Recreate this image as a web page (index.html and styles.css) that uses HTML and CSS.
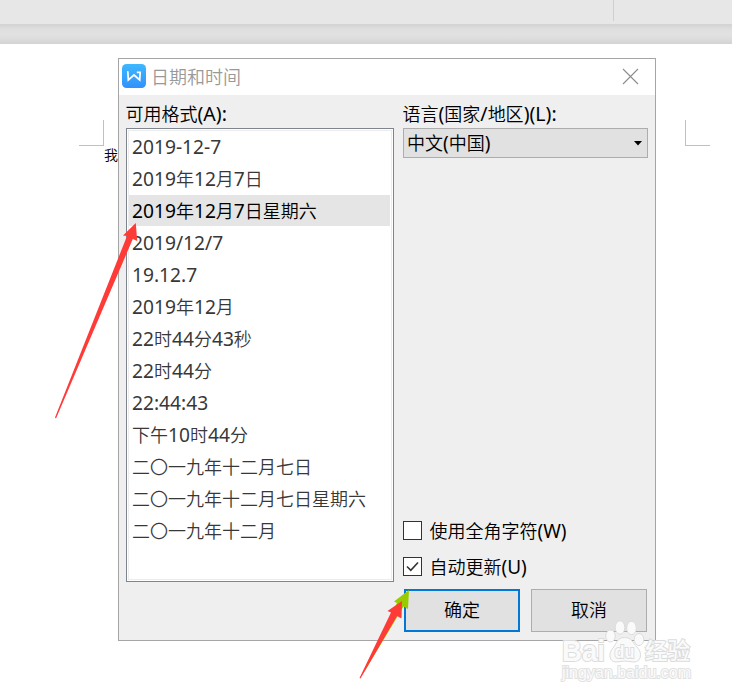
FILE: index.html
```html
<!DOCTYPE html>
<html lang="zh-CN">
<head>
<meta charset="utf-8">
<title>日期和时间</title>
<link rel="stylesheet" href="styles.css">
</head>
<body>
<div class="toolbar"><div class="divider"></div></div>
<div class="gutter"></div>
<main class="page">
  <i class="corner corner-left"></i>
  <i class="corner corner-right"></i>
  <span class="doc-text">我</span>
</main>

<section class="dialog">
  <header class="titlebar">
    <svg class="logo" width="24" height="24" viewBox="0 0 24 24">
      <defs><linearGradient id="blue" x1="0" y1="0" x2="0" y2="1"><stop offset="0" stop-color="#3fb8ff"/><stop offset="1" stop-color="#3291fb"/></linearGradient></defs>
      <rect width="24" height="24" rx="4.5" fill="url(#blue)"/>
      <path d="M5.8 7.3L6.3 16L12 11L17.7 16L18.2 8.3H14.8" fill="none" stroke="#fff" stroke-width="1.7"/>
    </svg>
    <h1 class="title">日期和时间</h1>
    <svg class="close" width="17" height="17" viewBox="0 0 17 17"><path d="M1 1L16 16M16 1L1 16" stroke="#8c8c8c" stroke-width="1.1"/></svg>
  </header>
  <div class="body">
    <div class="formats">
      <div class="label">可用格式<b>(A):</b></div>
      <ul class="list">
        <li><b>2019-12-7</b></li>
        <li><b>2019</b>年<b>12</b>月<b>7</b>日</li>
        <li class="selected"><b>2019</b>年<b>12</b>月<b>7</b>日星期六</li>
        <li><b>2019/12/7</b></li>
        <li><b>19.12.7</b></li>
        <li><b>2019</b>年<b>12</b>月</li>
        <li><b>22</b>时<b>44</b>分<b>43</b>秒</li>
        <li><b>22</b>时<b>44</b>分</li>
        <li><b>22:44:43</b></li>
        <li>下午<b>10</b>时<b>44</b>分</li>
        <li>二〇一九年十二月七日</li>
        <li>二〇一九年十二月七日星期六</li>
        <li>二〇一九年十二月</li>
      </ul>
    </div>
    <div class="options">
      <div class="label">语言<b>(</b>国家<b>/</b>地区<b>)(L):</b></div>
      <div class="select"><span>中文<b>(</b>中国<b>)</b></span><svg width="8" height="5" viewBox="0 0 8 5"><path d="M0 0H8L4 4.5Z"/></svg></div>
      <div class="check first"><span class="box"></span><span>使用全角字符<b>(W)</b></span></div>
      <div class="check"><span class="box"><svg width="17" height="17" viewBox="0 0 17 17"><path d="M3 8.5L6.8 12.3L14 4.5" fill="none" stroke="#333" stroke-width="1.6"/></svg></span><span>自动更新<b>(U)</b></span></div>
      <div class="buttons"><div class="button primary">确定</div><div class="button">取消</div></div>
    </div>
  </div>
</section>

<svg class="overlay" width="732" height="699" viewBox="0 0 732 699">
  <path fill="#ff3b38" d="M135.8 223L137.2 241L132.8 239L56 418.5L55 417.5L127 236L123 235.5Z"/>
  <path fill="#9c0" d="M409 590L408 609L403.5 606.5L363 674L397 603L394 601.5Z"/>
  <path fill="#ff3b38" d="M402 601L401.5 618.5L397 616L360.5 678.5L359.5 678L391 612.5L387.5 611Z"/>
  <g class="mark">
    <text x="562" y="661" class="brand" textLength="43" lengthAdjust="spacingAndGlyphs">Bai</text>
    <ellipse cx="610.5" cy="636" rx="4.8" ry="6"/><ellipse cx="620" cy="627.5" rx="4.8" ry="6.7"/>
    <ellipse cx="631.5" cy="628" rx="4.8" ry="6.7"/><ellipse cx="639" cy="639.5" rx="4.8" ry="6"/>
    <path d="M624.5 637.5C632 637.5 633 643 637 647C643 653 641 662 634 662Q624.5 660 616 662C609 662 608 653 613 648C617 643 617 637.5 624.5 637.5Z"/>
    <text x="614.5" y="658" class="du" textLength="20" lengthAdjust="spacingAndGlyphs">du</text>
    <text x="645" y="659" class="cjk" textLength="45">经验</text>
    <text x="562" y="678" class="url" textLength="129">jingyan.baidu.com</text>
  </g>
</svg>
</body>
</html>
```
FILE: styles.css
```css
* { box-sizing: border-box; }
body {
  margin: 0;
  width: 732px;
  height: 699px;
  overflow: hidden;
  position: relative;
  background: #fff;
  color: #000;
  font: 350 18px/24px "Noto Sans CJK SC", sans-serif;
}
b { font-family: "Noto Sans", sans-serif; font-size: 19px; font-weight: 400; line-height: 1; }
.toolbar { height: 24px; background: #e7e7e7; display: flex; }
.divider { width: 1px; height: 21px; margin-left: 613px; background: #cfcfcf; }
.gutter { height: 20px; background: linear-gradient(#d2d2d2, #dedede 25%, #e1e1e1 50%, #dedede 70%, #d3d3d3); }
.page { height: 655px; }
.corner { position: absolute; top: 120px; width: 25px; height: 26px; border-bottom: 1px solid #c0c0c0; }
.corner-left { left: 79px; border-right: 1px solid #c0c0c0; }
.corner-right { left: 685px; border-left: 1px solid #c0c0c0; }
.doc-text { position: absolute; left: 104px; top: 142px; font-size: 14px; }

.dialog {
  position: absolute;
  left: 118px;
  top: 58px;
  width: 538px;
  height: 583px;
  border: 1px solid #a5a5a5;
  background: #efefef;
}
.titlebar { height: 36px; display: flex; align-items: center; padding: 0 16px 2px 3px; background: #fff; }
.title { margin: 0 0 0 5px; flex: 1; font-size: 18px; font-weight: 350; color: #999; }
.close { margin-top: 0; }
.body { display: flex; gap: 9px; padding: 6px 7px 0; }
.label { height: 24px; margin: 0 0 3px -0.5px; white-space: nowrap; }
.label b { font-size: 19.5px; }
.list {
  list-style: none;
  margin: 0;
  width: 268px;
  height: 454px;
  padding: 1px;
  border: 1px solid #7f858e;
  background: #fff;
  box-shadow: inset 0 0 0 1px #fff, inset 0 0 0 2px #ececec;
  color: #383838;
}
.list li { height: 31px; margin: 1px 2px 0 1px; padding-left: 3px; line-height: 31px; white-space: nowrap; }
.list b { font-size: 19.2px; }
.list .selected { background: #e5e5e5; color: #000; }
.options { width: 245px; }
.select {
  height: 30px;
  display: flex;
  align-items: center;
  justify-content: space-between;
  padding: 0 5px 0 3px;
  border: 1px solid #adadad;
  background: #e1e1e1;
}
.select span { margin-top: -2px; }
.check { display: flex; align-items: center; gap: 7.5px; height: 24px; margin-bottom: 12px; white-space: nowrap; }
.check span + span { margin-top: -2px; }
.check.first { margin-top: 361px; }
.box { width: 19px; height: 19px; border: 1px solid #333; background: #fff; display: flex; margin-bottom: 2px; }
.buttons { display: flex; gap: 11px; margin: -2px 0 0 1px; }
.button { width: 116px; height: 43px; border: 1px solid #adadad; background: #e1e1e1; text-align: center; line-height: 39px; flex: none; }
.primary { border: 2px solid #0078d7; line-height: 37px; }

.overlay { position: absolute; left: 0; top: 0; }
.mark { fill: #fafafa; stroke: #dcdcdc; stroke-width: 1; font-family: "Liberation Sans", sans-serif; }
.mark text { paint-order: stroke; stroke-width: 2; }
.brand { font-size: 29px; font-weight: 700; }
.du { font-size: 19px; font-weight: 700; }
.mark .cjk { font-family: "Noto Sans CJK SC", sans-serif; font-size: 22.5px; font-weight: 500; }
.mark .url { font-size: 16px; font-weight: 400; stroke: #e2e2e2; }
```
